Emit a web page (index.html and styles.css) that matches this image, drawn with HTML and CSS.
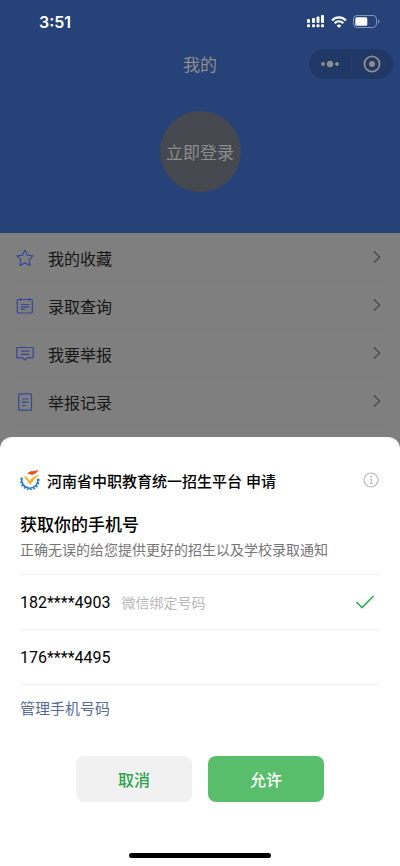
FILE: index.html
```html
<!DOCTYPE html>
<html lang="zh-CN">
<head>
<meta charset="utf-8">
<meta name="viewport" content="width=device-width, initial-scale=1">
<title>我的</title>
<link rel="stylesheet" href="styles.css">
</head>
<body>
<div class="screen">
  <header class="hero">
    <div class="status">
      <span class="time">3:51</span>
      <div class="status-icons">
        <svg width="18" height="13" viewBox="0 0 18 13" fill="#fff">
          <rect x="0" y="4" width="3" height="4" rx="1"/><rect x="5" y="3" width="3" height="5" rx="1"/><rect x="9.500" y="1.500" width="3" height="6.500" rx="1"/><rect x="14" y="0" width="3" height="8" rx="1"/>
          <rect x="0" y="9.300" width="3" height="3" rx="1"/><rect x="5" y="9.300" width="3" height="3" rx="1"/><rect x="9.500" y="9.300" width="3" height="3" rx="1"/><rect x="14" y="9.300" width="3" height="3" rx="1"/>
        </svg>
        <svg width="16" height="12" viewBox="0 0 16 12" fill="none" stroke="#fff" stroke-width="2.200">
          <path d="M1 4.500C5 .3 11 .3 15 4.500"/><path d="M3.700 7.200C6.200 4.700 9.800 4.700 12.300 7.200"/><path d="M8 12 5.600 9.500C7 8.200 9 8.200 10.400 9.500Z" fill="#fff" stroke="none"/>
        </svg>
        <svg width="27" height="13" viewBox="0 0 27 13">
          <rect x=".5" y=".5" width="23" height="12" rx="3.500" fill="none" stroke="#8291b4"/><rect x="2.300" y="2.300" width="12" height="8.400" rx="1.500" fill="#fff"/><path d="M25 4.500c2 .6 2 3.400 0 4Z" fill="#8291b4"/>
        </svg>
      </div>
    </div>
    <div class="navbar">
      <h1 class="page-title">我的</h1>
      <div class="capsule">
        <button class="capsule-button" aria-label="更多">
          <svg width="20" height="8" viewBox="0 0 20 8" fill="#8d8d89"><circle cx="3" cy="4" r="1.900"/><circle cx="10" cy="4" r="3.200"/><circle cx="17" cy="4" r="1.900"/></svg>
        </button>
        <button class="capsule-button" aria-label="关闭">
          <svg width="18" height="18" viewBox="0 0 18 18"><circle cx="9" cy="9" r="7.600" fill="none" stroke="#8d8d89" stroke-width="1.900"/><circle cx="9" cy="9" r="3" fill="#8d8d89"/></svg>
        </button>
      </div>
    </div>
    <button class="login">立即登录</button>
  </header>
  <nav class="menu">
    <a class="menu-row" href="#favorites">
      <svg class="menu-icon" viewBox="0 0 18 18"><path d="M9 1.100 11.400 6.100 17 6.900 13 10.900 14 16.500 9 13.900 4 16.500 5 10.900 1 6.900 6.600 6.100Z"/></svg>
      <span class="menu-label">我的收藏</span>
      <svg class="chevron" viewBox="0 0 8 14"><path d="M1 1.300 6.700 7 1 12.700"/></svg>
    </a>
    <a class="menu-row" href="#admission">
      <svg class="menu-icon" viewBox="0 0 18 18"><rect x="1.300" y="2.500" width="15" height="13.500" rx="1"/><path d="M4.700 1v3M13 1v3M4.700 7.500h8.500M4.700 9.800h8.500M4.700 12.200h4.500"/></svg>
      <span class="menu-label">录取查询</span>
      <svg class="chevron" viewBox="0 0 8 14"><path d="M1 1.300 6.700 7 1 12.700"/></svg>
    </a>
    <a class="menu-row" href="#report">
      <svg class="menu-icon" viewBox="0 0 18 18"><path d="M1.500 2.500h15q.7 0 .7.700v9q0 .7-.7.700H11L9 15.200 7 12.900H1.500q-.7 0-.7-.7v-9q0-.7.7-.7ZM5 6.200h8.500M5 9.300h8.500"/></svg>
      <span class="menu-label">我要举报</span>
      <svg class="chevron" viewBox="0 0 8 14"><path d="M1 1.300 6.700 7 1 12.700"/></svg>
    </a>
    <a class="menu-row" href="#records">
      <svg class="menu-icon" viewBox="0 0 18 18"><rect x="2.700" y=".8" width="12.800" height="16.400" rx="1"/><path d="M6 6h6.500M6 9.200h6.500M6 12.500h4"/></svg>
      <span class="menu-label">举报记录</span>
      <svg class="chevron" viewBox="0 0 8 14"><path d="M1 1.300 6.700 7 1 12.700"/></svg>
    </a>
  </nav>
  <form class="sheet" role="dialog" aria-labelledby="sheet-title">
    <div class="applicant">
      <svg width="20" height="20" viewBox="0 0 20 20">
        <path d="M2.200 7.400A8.100 8.100 0 1 0 17.800 8.500" fill="none" stroke="#2478dc" stroke-width="1.500"/>
        <path d="M1.300 8A9 9 0 1 0 18.700 9" fill="none" stroke="#2478dc" stroke-width="1.600" stroke-dasharray="1.800 1.600"/>
        <path d="M3.600 6.200 6.200 6.500 9.600 10.800Q13.500 6 19.500 4.800 14 8.500 9.900 15Q7.500 10.500 3.600 6.200Z" fill="#f9ae24"/>
        <path d="M7.200 4.300C8.600.9 11.500 1.500 13.700 1 15.600.6 16.900.5 18.400 0 17.300 3 15.300 2.800 15.300 4.300 13 3.300 12.300 4.200 12.700 6 10.800 3.800 9.300 3.600 7.200 4.300Z" fill="#e95220"/>
      </svg>
      <span class="applicant-name">河南省中职教育统一招生平台 申请</span>
      <button type="button" class="info" aria-label="说明">
        <svg width="16" height="16" viewBox="0 0 16 16"><circle cx="8" cy="8" r="7" fill="none" stroke="#b8b8b8" stroke-width="1.200"/><circle cx="8" cy="4.700" r=".9" fill="#b8b8b8"/><path d="M7 7h1.300v4.500M6.700 11.500h3" fill="none" stroke="#b8b8b8"/></svg>
      </button>
    </div>
    <h2 class="sheet-title" id="sheet-title">获取你的手机号</h2>
    <p class="sheet-note">正确无误的给您提供更好的招生以及学校录取通知</p>
    <div class="phones">
      <label class="phone">
        <input class="phone-radio" type="radio" name="phone" checked>
        <span class="number">182****4903</span>
        <span class="phone-note">微信绑定号码</span>
        <svg class="check" viewBox="0 0 20 14"><path d="M1.500 7 7 12.500 18.500 1"/></svg>
      </label>
      <label class="phone">
        <input class="phone-radio" type="radio" name="phone">
        <span class="number">176****4495</span>
        <svg class="check" viewBox="0 0 20 14"><path d="M1.500 7 7 12.500 18.500 1"/></svg>
      </label>
    </div>
    <a class="manage" href="#phones">管理手机号码</a>
    <div class="actions">
      <button type="button" class="action">取消</button>
      <button type="button" class="action action-primary">允许</button>
    </div>
    <div class="home-bar"></div>
  </form>
</div>
</body>
</html>
```
FILE: styles.css
```css
* {
  box-sizing: border-box;
}

body {
  margin: 0;
  background: #7f7f7f;
  color: #000;
  font-family: "Inter", "Noto Sans CJK SC", sans-serif;
  font-size: 16px;
}

button {
  border: 0;
  padding: 0;
  background: none;
  font: inherit;
  cursor: pointer;
}

a {
  color: inherit;
  text-decoration: none;
}

svg {
  display: block;
  flex: none;
}

.screen {
  position: relative;
  min-height: 100vh;
}

.hero {
  display: flex;
  flex-direction: column;
  padding-bottom: 41px;
  background: #274179;
}

.status {
  display: flex;
  align-items: center;
  justify-content: space-between;
  height: 43px;
  padding: 0 20px 0 39px;
}

.time {
  color: #fff;
  font-size: 16px;
  font-weight: 600;
}

.status-icons {
  display: flex;
  align-items: center;
  gap: 6px;
}

.navbar {
  display: grid;
  grid-template-columns: 1fr auto 1fr;
  align-items: center;
  height: 41px;
  padding: 0 7px;
}

.page-title {
  grid-column: 2;
  margin: 0;
  color: #8d8d89;
  font-size: 17px;
  font-weight: 400;
}

.capsule {
  display: flex;
  align-items: center;
  justify-self: end;
  width: 84px;
  height: 30px;
  border-radius: 15px;
  background: #213765;
}

.capsule-button {
  display: flex;
  flex: 1;
  align-items: center;
  justify-content: center;
  height: 18px;
}

.capsule-button + .capsule-button {
  border-left: 1px solid #2c406a;
}

.login {
  align-self: center;
  width: 81px;
  height: 81px;
  margin-top: 27px;
  border-radius: 50%;
  background: #45484f;
  color: #8b8d8b;
  font-size: 17px;
}

.menu {
  display: flex;
  flex-direction: column;
  padding: 1px 15px 0;
}

.menu-row {
  display: flex;
  align-items: center;
  height: 48px;
  padding: 0 4px 0 1px;
  border-bottom: 1px solid #787878;
  color: #161616;
}

.menu-icon {
  width: 18px;
  height: 18px;
  fill: none;
  stroke: #34489a;
  stroke-width: 1.2;
  stroke-linejoin: round;
}

.menu-label {
  flex: 1;
  margin-left: 14px;
}

.chevron {
  width: 8px;
  height: 14px;
  margin-bottom: 2px;
  fill: none;
  stroke: #444;
  stroke-width: 1.2;
}

.sheet {
  position: absolute;
  right: 0;
  bottom: 0;
  left: 0;
  padding: 28px 20px 8px;
  border-radius: 12px 12px 0 0;
  background: #fff;
}

.applicant {
  display: flex;
  align-items: center;
  height: 30px;
}

.applicant-name {
  flex: 1;
  margin-left: 7px;
  font-size: 15px;
  font-weight: 500;
}

.info {
  margin-right: 1px;
}

.sheet-title {
  margin: 16px 0 0;
  font-size: 17px;
  font-weight: 500;
  line-height: 28px;
}

.sheet-note {
  margin: 0 0 13px;
  color: #757575;
  font-size: 14px;
  line-height: 22px;
}

.phones {
  border-top: 1px solid #f2f2f2;
}

.phone {
  display: flex;
  align-items: center;
  height: 55px;
  border-bottom: 1px solid #f2f2f2;
  cursor: pointer;
}

.phone-radio {
  width: 0;
  height: 0;
  margin: 0;
  appearance: none;
}

.number {
  font-family: "Roboto", sans-serif;
}

.phone-note {
  margin-left: 11px;
  color: #b8b8b8;
  font-size: 14px;
}

.check {
  width: 20px;
  height: 14px;
  margin-right: 5px;
  margin-left: auto;
  visibility: hidden;
  fill: none;
  stroke: #2fac53;
  stroke-width: 1.6;
}

.phone-radio:checked ~ .check {
  visibility: visible;
}

.manage {
  display: block;
  margin-top: 12px;
  color: #576b95;
  font-size: 15px;
  line-height: 24px;
}

.actions {
  display: flex;
  justify-content: center;
  gap: 16px;
  margin-top: 35px;
}

.action {
  width: 116px;
  height: 46px;
  border-radius: 8px;
  background: #f1f1f1;
  color: #30a34f;
  font-weight: 500;
}

.action-primary {
  background: #59be6c;
  color: #fff;
}

.home-bar {
  width: 142px;
  height: 5px;
  margin: 51px auto 0;
  border-radius: 3px;
  background: #000;
}
```
